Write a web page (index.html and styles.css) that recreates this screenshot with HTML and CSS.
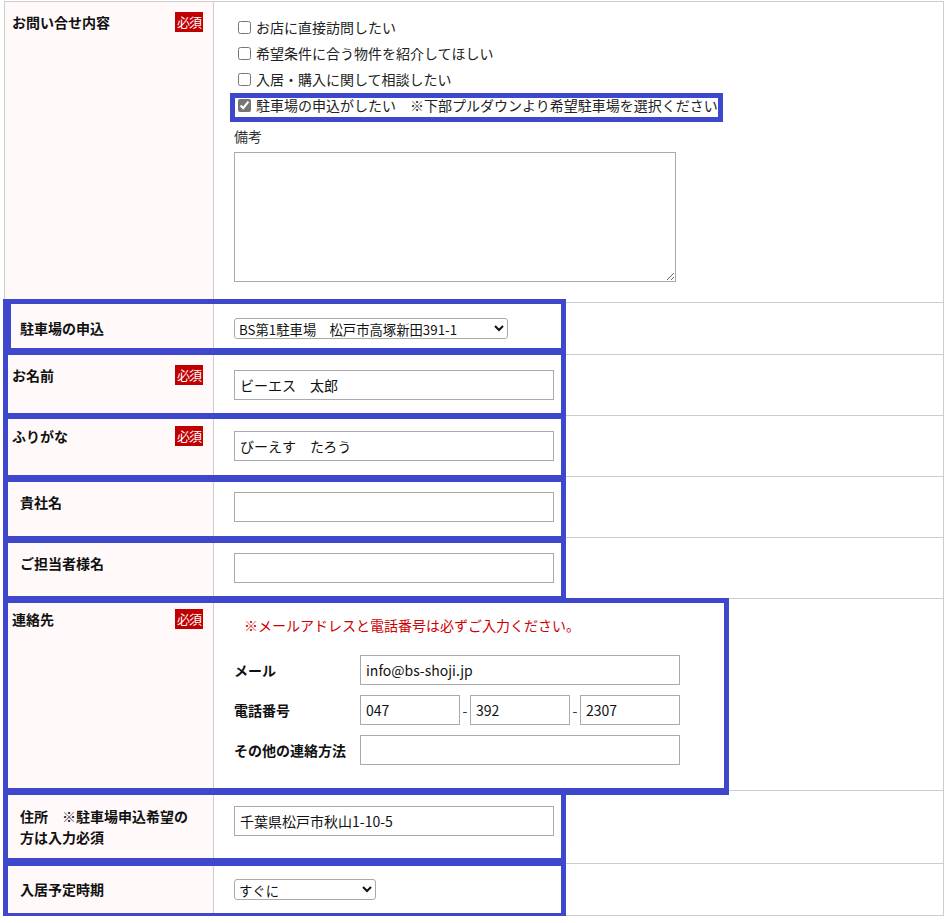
FILE: index.html
```html
<!DOCTYPE html>
<html lang="ja">
<head>
<meta charset="utf-8">
<title>お問い合せフォーム</title>
<link rel="stylesheet" href="styles.css">
</head>
<body>
<div class="form">
  <div class="row">
    <div class="lbl req"><span>お問い合せ内容</span><span class="badge">必須</span></div>
    <div class="val val-inquiry">
      <label class="chk"><input type="checkbox">お店に直接訪問したい</label>
      <label class="chk"><input type="checkbox">希望条件に合う物件を紹介してほしい</label>
      <label class="chk"><input type="checkbox">入居・購入に関して相談したい</label>
      <label class="chk"><input type="checkbox" class="is-checked" checked>駐車場の申込がしたい　※下部プルダウンより希望駐車場を選択ください</label>
      <div class="memo-label">備考</div>
      <textarea class="memo"></textarea>
    </div>
  </div>
  <div class="row">
    <div class="lbl mid">駐車場の申込</div>
    <div class="val">
      <select class="sel sel-parking"><option>BS第1駐車場　松戸市高塚新田391-1</option></select>
    </div>
  </div>
  <div class="row">
    <div class="lbl req"><span>お名前</span><span class="badge">必須</span></div>
    <div class="val"><input class="txt" type="text" value="ビーエス　太郎"></div>
  </div>
  <div class="row">
    <div class="lbl req"><span>ふりがな</span><span class="badge">必須</span></div>
    <div class="val"><input class="txt" type="text" value="びーえす　たろう"></div>
  </div>
  <div class="row">
    <div class="lbl mid">貴社名</div>
    <div class="val"><input class="txt" type="text" value=""></div>
  </div>
  <div class="row">
    <div class="lbl mid">ご担当者様名</div>
    <div class="val"><input class="txt" type="text" value=""></div>
  </div>
  <div class="row">
    <div class="lbl req"><span>連絡先</span><span class="badge">必須</span></div>
    <div class="val val-contact">
      <p class="contact-note">※メールアドレスと電話番号は必ずご入力ください。</p>
      <div class="contact-grid">
        <span class="sub-lbl">メール</span>
        <input class="txt" type="text" value="info@bs-shoji.jp">
        <span class="sub-lbl">電話番号</span>
        <div class="tel">
          <input class="txt tel-in" type="text" value="047"><span class="dash">-</span><input class="txt tel-in" type="text" value="392"><span class="dash">-</span><input class="txt tel-in" type="text" value="2307">
        </div>
        <span class="sub-lbl">その他の連絡方法</span>
        <input class="txt" type="text" value="">
      </div>
    </div>
  </div>
  <div class="row">
    <div class="lbl mid">住所　※駐車場申込希望の方は入力必須</div>
    <div class="val"><input class="txt" type="text" value="千葉県松戸市秋山1-10-5"></div>
  </div>
  <div class="row">
    <div class="lbl mid">入居予定時期</div>
    <div class="val">
      <select class="sel sel-when"><option>すぐに</option></select>
    </div>
  </div>
</div>

<div class="mark m-a"></div>
<div class="mark m-b"></div>
<div class="mark m-c"></div>
<div class="mark m-d"></div>
<div class="mark m-e"></div>
<div class="mark m-f"></div>
<div class="mark m-g"></div>
<div class="mark m-h"></div>
<div class="mark m-i"></div>
</body>
</html>
```

FILE: styles.css
```css
* { box-sizing: border-box; }

body {
  margin: 0;
  background: #ffffff;
  color: #222222;
  font-family: "Noto Sans CJK JP", "Noto Sans", sans-serif;
  font-size: 14px;
  position: relative;
}

.form {
  margin: 1px 0 0 4px;
  width: 940px;
  border: 1px solid #cdcdcd;
}

.row {
  display: grid;
  grid-template-columns: 209px 1fr;
  border-bottom: 1px solid #cdcdcd;
}
.row:last-child { border-bottom: none; }

.lbl {
  background: #fff9fa;
  border-right: 1px solid #cdcdcd;
  font-weight: 700;
  font-size: 14px;
  line-height: 21px;
  color: #111111;
}
.lbl.req {
  display: flex;
  justify-content: space-between;
  align-items: flex-start;
  padding: 10px 10px 10px 7px;
}
.lbl.mid {
  padding: 15px 15px;
}

.badge {
  width: 28px;
  height: 20px;
  background: #c00000;
  color: #ffffff;
  font-weight: 400;
  font-size: 13px;
  line-height: 20px;
  letter-spacing: -1px;
  text-align: center;
}

.val {
  padding: 15px 20px;
  font-size: 14px;
}

.val-inquiry { padding: 12px 20px 20px; }

.chk {
  display: flex;
  align-items: center;
  height: 26px;
  line-height: 26px;
  color: #222222;
}
.chk input {
  width: 13px;
  height: 13px;
  margin: 0 5px 0 4px;
}
.chk .is-checked { accent-color: #767676; }

.memo-label {
  margin-top: 8px;
  margin-bottom: 6px;
  line-height: 20px;
  color: #333333;
}
.memo {
  display: block;
  width: 442px;
  height: 130px;
  border: 1px solid #aaaaaa;
  margin: 0;
}

.txt {
  display: block;
  width: 320px;
  height: 30px;
  margin: 0;
  padding: 0 5px;
  border: 1px solid #aaaaaa;
  border-radius: 0;
  font-family: "Noto Sans CJK JP", "Noto Sans", sans-serif;
  font-size: 14px;
  color: #111111;
  background: #ffffff;
}

.sel {
  display: block;
  height: 21px;
  margin: 0;
  border: 1px solid #aaaaaa;
  border-radius: 3px;
  font-family: "Noto Sans CJK JP", "Noto Sans", sans-serif;
  font-size: 13.333px;
  color: #111111;
  background: #ffffff;
}
.sel-parking { width: 274px; }
.sel-when { width: 142px; }

.val-contact { padding: 15px 20px 25px; }

.contact-note {
  margin: 0 0 19px;
  padding-left: 10px;
  line-height: 22px;
  color: #cc0000;
}

.contact-grid {
  display: grid;
  grid-template-columns: 126px 320px;
  row-gap: 10px;
  align-items: center;
}
.sub-lbl {
  font-weight: 700;
  color: #111111;
}

.tel {
  display: flex;
  align-items: center;
}
.tel-in { width: 100px; }
.dash {
  width: 10px;
  text-align: center;
  color: #333333;
}

/* annotation frames drawn over the form */
.mark {
  position: absolute;
  border: 5px solid #3f48cc;
  pointer-events: none;
}
.m-a { left: 230px; top: 93px; width: 493px; height: 29px; }
.m-b { left: 3px; top: 299px; width: 563px; height: 56px; border-left-width: 8px; border-bottom-width: 7px; }
.m-c { left: 3px; top: 355px; width: 563px; height: 64px; border-top-width: 0; border-bottom-width: 6px; }
.m-d { left: 3px; top: 419px; width: 563px; height: 63px; border-top-width: 0; border-bottom-width: 7px; }
.m-e { left: 3px; top: 482px; width: 563px; height: 61px; border-top-width: 0; border-bottom-width: 7px; }
.m-f { left: 3px; top: 543px; width: 563px; height: 58px; border-top-width: 0; }
.m-g { left: 3px; top: 598px; width: 726px; height: 197px; border-bottom-width: 7px; }
.m-h { left: 3px; top: 795px; width: 563px; height: 68px; border-top-width: 0; }
.m-i { left: 3px; top: 861px; width: 563px; height: 57px; }
```
